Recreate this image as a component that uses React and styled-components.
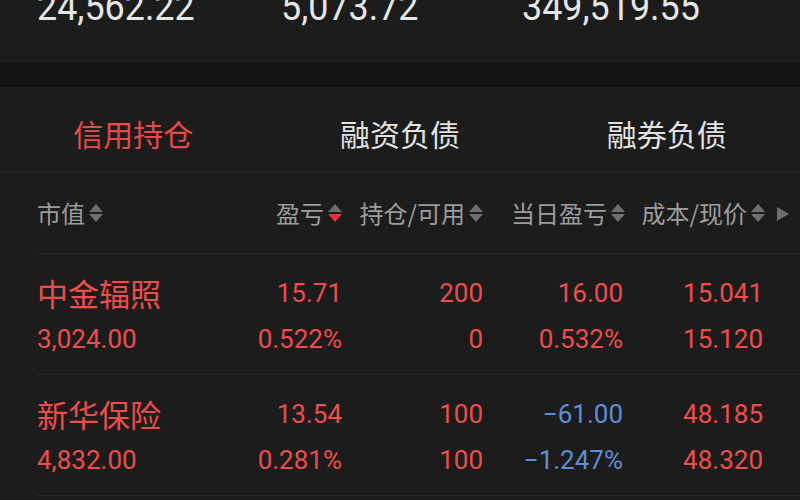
import styled, { createGlobalStyle } from "styled-components";

const Global = createGlobalStyle`
  body {
    margin: 0;
    background: #1c1c1c;
    overflow: hidden;
    font-family: Roboto, "Noto Sans CJK SC", sans-serif;
  }
`;

const Page = styled.div`
  width: 800px;
  height: 500px;
  background: #1c1c1c;
  overflow: hidden;
`;

const Summary = styled.div`
  height: 63px;
  display: flex;
  padding-left: 37px;
  overflow: hidden;
`;

const SumCell = styled.div`
  width: ${(p) => p.w}px;
  margin-top: -14px;
  font-size: 39px;
  line-height: 42px;
  color: #e6e6e6;
  white-space: nowrap;
  transform: scaleX(0.92);
  transform-origin: left top;
`;

const Band = styled.div`
  height: 24px;
  background: linear-gradient(#151515, #121212);
`;

const Tabs = styled.div`
  height: 85px;
  display: grid;
  grid-template-columns: 1fr 1fr 1fr;
  align-items: center;
  border-bottom: 1px solid #262626;
`;

const Tab = styled.div`
  text-align: center;
  font-family: "Noto Sans CJK SC", sans-serif;
  font-size: 30px;
  padding-top: 6px;
  color: ${(p) => (p.active ? "#e84a4a" : "#e2e2e2")};
`;

const Grid = styled.div`
  display: grid;
  grid-template-columns: 180px 125px 141px 140px 140px 37px;
  padding-left: 37px;
  align-items: center;
`;

const Header = styled(Grid)`
  height: 81px;
  position: relative;
  &::after {
    content: "";
    position: absolute;
    left: 37px;
    right: 0;
    bottom: 0;
    border-bottom: 1px solid #282828;
  }
`;

const HeadCell = styled.div`
  display: flex;
  align-items: center;
  justify-content: ${(p) => (p.left ? "flex-start" : "flex-end")};
  margin-right: ${(p) => p.shift || 0}px;
  font-family: "Noto Sans CJK SC", sans-serif;
  font-size: 24px;
  color: #9c9c9c;
  padding-bottom: 2px;
`;

const SortIcon = styled.span`
  display: inline-flex;
  flex-direction: column;
  gap: 2px;
  margin-left: 4px;
`;

const Tri = styled.span`
  width: 0;
  height: 0;
  border-left: 7px solid transparent;
  border-right: 7px solid transparent;
  ${(p) =>
    p.down
      ? `border-top: 8px solid ${p.on ? "#ee2f3d" : "#6e6e6e"};`
      : `border-bottom: 8px solid #6e6e6e;`}
`;

const Play = styled.div`
  justify-self: start;
  margin-left: 14px;
  width: 0;
  height: 0;
  border-top: 7px solid transparent;
  border-bottom: 7px solid transparent;
  border-left: 12px solid #6e6e6e;
`;

const Row = styled(Grid)`
  height: 121px;
  position: relative;
  &::after {
    content: "";
    position: absolute;
    left: 37px;
    right: 0;
    bottom: 0;
    border-bottom: 1px solid #2a2a2a;
  }
`;

const Cell = styled.div`
  display: flex;
  flex-direction: column;
  align-items: ${(p) => (p.left ? "flex-start" : "flex-end")};
  gap: 12px;
  padding-top: 3px;
`;

const Name = styled.div`
  font-family: "Noto Sans CJK SC", sans-serif;
  font-size: 31px;
  line-height: 34px;
  color: #ef4c4c;
`;

const Num = styled.div`
  font-family: Roboto, sans-serif;
  font-size: 26px;
  line-height: 34px;
  color: ${(p) => (p.blue ? "#5c8fd8" : "#ef4c4c")};
`;

function Sort({ on }) {
  return (
    <SortIcon>
      <Tri />
      <Tri down on={on} />
    </SortIcon>
  );
}

const rows = [
  {
    name: "中金辐照",
    value: "3,024.00",
    cols: [
      ["15.71", "0.522%"],
      ["200", "0"],
      ["16.00", "0.532%"],
      ["15.041", "15.120"],
    ],
  },
  {
    name: "新华保险",
    value: "4,832.00",
    cols: [
      ["13.54", "0.281%"],
      ["100", "100"],
      ["−61.00", "−1.247%", true],
      ["48.185", "48.320"],
    ],
  },
];

export default function App() {
  return (
    <Page>
      <Global />
      <Summary>
        <SumCell w={244}>24,562.22</SumCell>
        <SumCell w={241}>5,073.72</SumCell>
        <SumCell w={220}>349,519.55</SumCell>
      </Summary>
      <Band />
      <Tabs>
        <Tab active>信用持仓</Tab>
        <Tab>融资负债</Tab>
        <Tab>融券负债</Tab>
      </Tabs>
      <Header>
        <HeadCell left>
          市值
          <Sort />
        </HeadCell>
        <HeadCell>
          盈亏
          <Sort on />
        </HeadCell>
        <HeadCell>
          持仓/可用
          <Sort />
        </HeadCell>
        <HeadCell shift={-2}>
          当日盈亏
          <Sort />
        </HeadCell>
        <HeadCell shift={-2}>
          成本/现价
          <Sort />
        </HeadCell>
        <Play />
      </Header>
      {rows.map((r) => (
        <Row key={r.name}>
          <Cell left>
            <Name>{r.name}</Name>
            <Num>{r.value}</Num>
          </Cell>
          {r.cols.map((c, i) => (
            <Cell key={i}>
              <Num blue={c[2]}>{c[0]}</Num>
              <Num blue={c[2]}>{c[1]}</Num>
            </Cell>
          ))}
        </Row>
      ))}
    </Page>
  );
}
